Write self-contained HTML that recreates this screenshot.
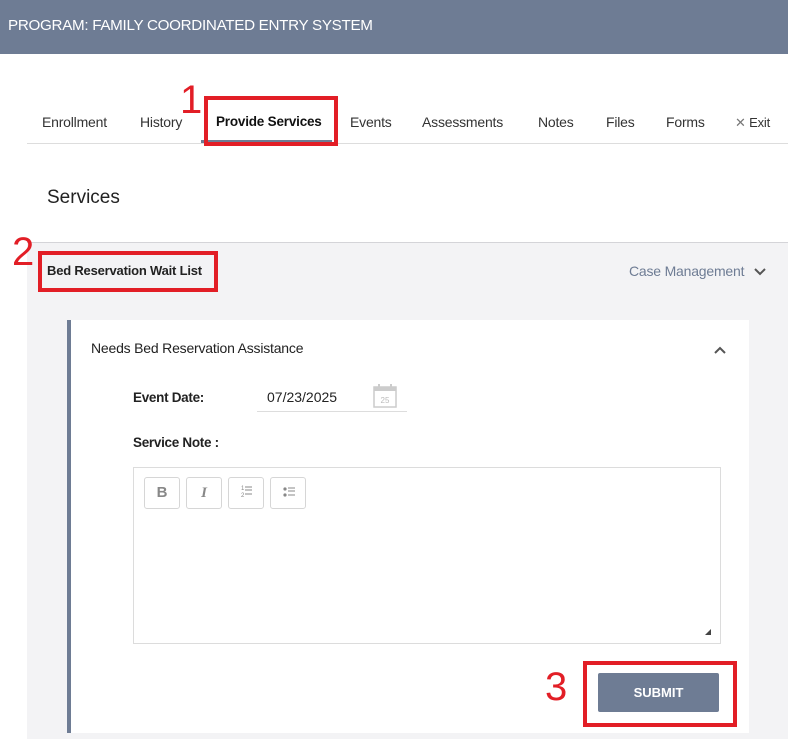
<!DOCTYPE html>
<html><head><meta charset="utf-8"><style>
*{margin:0;padding:0;box-sizing:border-box}
body{width:788px;height:739px;overflow:hidden;background:#fff;font-family:"Liberation Sans",Arial,sans-serif;color:#222;position:relative}
.a{position:absolute;white-space:nowrap}
.hdr{left:0;top:0;width:788px;height:54px;background:#6e7c94}
.tab{top:114px;font-size:14px;color:#333;letter-spacing:-0.2px}
.red{position:absolute;border:4px solid #e21e26}
.num{position:absolute;color:#e21e26;font-size:40px;line-height:40px}
.btn{position:absolute;top:477px;width:36px;height:32px;border:1px solid #d6d6d6;border-radius:3px;background:#fff;color:#888;font-size:15px;text-align:center;line-height:30px}
</style></head><body>
<div class="a hdr"></div>
<div class="a" style="left:8px;top:17px;color:#fff;font-size:15.2px;letter-spacing:-0.3px">PROGRAM: FAMILY COORDINATED ENTRY SYSTEM</div>

<div class="a tab" style="left:42px">Enrollment</div>
<div class="a tab" style="left:140px">History</div>
<div class="a tab" style="left:216px;font-weight:bold;color:#111;font-size:13.5px">Provide Services</div>
<div class="a tab" style="left:350px">Events</div>
<div class="a tab" style="left:422px">Assessments</div>
<div class="a tab" style="left:538px">Notes</div>
<div class="a tab" style="left:606px">Files</div>
<div class="a tab" style="left:666px">Forms</div>
<div class="a tab" style="left:735px;font-size:13px;top:115px"><span style="color:#777">✕</span> Exit</div>
<div class="a" style="left:27px;top:143px;width:761px;height:1px;background:#ddd"></div>
<div class="a" style="left:201px;top:140px;width:131px;height:3px;background:#6e7c94"></div>
<div class="red" style="left:204px;top:96px;width:134px;height:50px"></div>
<div class="num" style="left:180px;top:80px">1</div>

<div class="a" style="left:47px;top:187px;font-size:19px;color:#222">Services</div>

<div class="a" style="left:27px;top:242px;width:761px;height:497px;background:#f3f3f5;border-top:1px solid #d4d4d8"></div>
<div class="a" style="left:47px;top:263px;font-size:13px;font-weight:bold;color:#222;letter-spacing:-0.2px">Bed Reservation Wait List</div>
<div class="red" style="left:38px;top:251px;width:180px;height:41px"></div>
<div class="num" style="left:12px;top:232px">2</div>
<div class="a" style="left:629px;top:263px;font-size:14px;color:#6e7c94;letter-spacing:-0.2px">Case Management</div>
<svg class="a" style="left:753px;top:267px" width="14" height="10"><path d="M2 2l5 5 5-5" stroke="#555" stroke-width="2" fill="none"/></svg>

<div class="a" style="left:67px;top:320px;width:682px;height:413px;background:#fff;border-left:4px solid #6e7c94"></div>
<div class="a" style="left:91px;top:340px;font-size:14px;color:#222;letter-spacing:-0.2px">Needs Bed Reservation Assistance</div>
<svg class="a" style="left:713px;top:345px" width="14" height="10"><path d="M2 8l5-5 5 5" stroke="#555" stroke-width="2" fill="none"/></svg>

<div class="a" style="left:133px;top:390px;font-size:13.5px;font-weight:bold;color:#222;letter-spacing:-0.3px">Event Date:</div>
<div class="a" style="left:267px;top:389px;font-size:14px;color:#222">07/23/2025</div>
<div class="a" style="left:257px;top:411px;width:150px;height:1px;background:#ddd"></div>
<svg class="a" style="left:372px;top:383px" width="26" height="26"><rect x="2" y="4" width="22" height="20" fill="#fff" stroke="#ccc" stroke-width="1.5"/><rect x="2" y="4" width="22" height="4" fill="#ccc"/><rect x="6" y="1" width="2" height="5" fill="#ccc"/><rect x="18" y="1" width="2" height="5" fill="#ccc"/><text x="13" y="20" font-size="8" fill="#bbb" text-anchor="middle" font-family="Liberation Sans">25</text></svg>

<div class="a" style="left:133px;top:435px;font-size:13.5px;font-weight:bold;color:#222;letter-spacing:-0.3px">Service Note :</div>
<div class="a" style="left:133px;top:467px;width:588px;height:177px;border:1px solid #dcdcdc;background:#fff"></div>
<div class="btn" style="left:144px;font-weight:bold">B</div>
<div class="btn" style="left:186px;font-style:italic;font-family:'Liberation Serif',serif;font-weight:bold">I</div>
<div class="btn" style="left:228px"><svg width="34" height="30"><text x="12" y="12" font-size="6" fill="#888" font-family="Liberation Sans">1</text><text x="12" y="19" font-size="6" fill="#888" font-family="Liberation Sans">2</text><path d="M16 9h7M16 12h7M16 16h7" stroke="#888" stroke-width="1"/></svg></div>
<div class="btn" style="left:270px"><svg width="34" height="30"><circle cx="14" cy="11" r="1.6" fill="#888"/><circle cx="14" cy="17" r="1.6" fill="#888"/><path d="M17 10h7M17 13h7M17 17h7" stroke="#888" stroke-width="1"/></svg></div>
<svg class="a" style="left:705px;top:629px" width="8" height="8"><path d="M6 0v6H0z" fill="#444"/></svg>

<div class="a" style="left:598px;top:673px;width:121px;height:39px;background:#6e7c94;border-radius:2px;color:#fff;font-weight:bold;font-size:13px;text-align:center;line-height:39px">SUBMIT</div>
<div class="red" style="left:583px;top:661px;width:154px;height:66px"></div>
<div class="num" style="left:545px;top:667px">3</div>
</body></html>
